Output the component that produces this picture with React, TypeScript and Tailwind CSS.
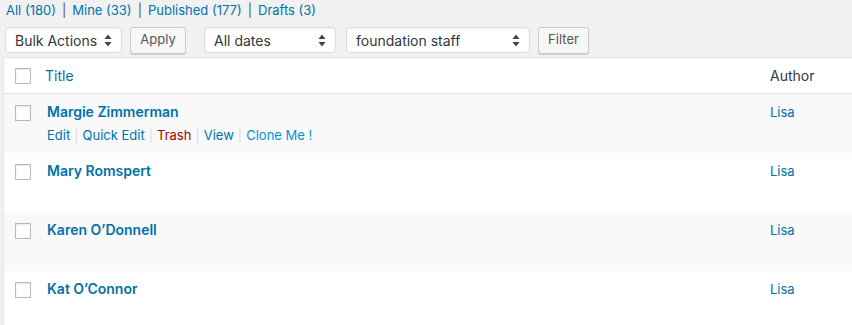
import React from "react";

type Post = {
  title: string
  author: string
  actions?: boolean
}

const posts: Post[] = [
  { title: "Margie Zimmerman", author: "Lisa", actions: true },
  { title: "Mary Romspert", author: "Lisa" },
  { title: "Karen O’Donnell", author: "Lisa" },
  { title: "Kat O’Connor", author: "Lisa" },
]

const Arrows = () => (
  <svg width="8" height="13" viewBox="0 0 8 13" className="shrink-0">
    <path d="M4 0.5 L7.5 5 H0.5 Z" fill="#444" />
    <path d="M4 12.5 L7.5 8 H0.5 Z" fill="#444" />
  </svg>
)

const Select = ({ label, width }: { label: string; width: string }) => (
  <div
    className={`${width} h-[26px] flex items-center justify-between pl-[9px] pr-[9px] bg-white border border-[#ddd] rounded-[4px] shadow-[inset_0_1px_2px_rgba(0,0,0,0.07)] text-[14px] text-[#32373c]`}
  >
    <span>{label}</span>
    <Arrows />
  </div>
)

const Button = ({ label, width }: { label: string; width: string }) => (
  <div
    className={`${width} h-[27px] flex items-center justify-center bg-[#f7f7f7] border border-[#ccc] rounded-[3px] shadow-[0_1px_0_#ccc] text-[13px] text-[#555]`}
  >
    {label}
  </div>
)

const Checkbox = () => (
  <div className="w-[16px] h-[16px] bg-white border border-[#b4b9be] shadow-[inset_0_1px_2px_rgba(0,0,0,0.1)]" />
)

const Sep = () => <span className="text-[#555] px-[6px]">|</span>
const ActionSep = () => <span className="text-[#ddd] px-[4px]">|</span>

export default function App() {
  return (
    <div className="w-[852px] h-[325px] overflow-hidden bg-[#f1f1f1] font-['Inter',sans-serif]">
      <div className="h-[20px] pl-[6px] pt-[1px] text-[13px] leading-[17px] text-[#0073aa] flex items-center">
        <span>All (180)</span>
        <Sep />
        <span>Mine (33)</span>
        <Sep />
        <span>Published (177)</span>
        <Sep />
        <span>Drafts (3)</span>
      </div>

      <div className="flex items-center pl-[5px] mt-[7px] h-[26px]">
        <Select label="Bulk Actions" width="w-[117px]" />
        <div className="ml-[8px]">
          <Button label="Apply" width="w-[56px]" />
        </div>
        <div className="ml-[18px]">
          <Select label="All dates" width="w-[132px]" />
        </div>
        <div className="ml-[10px]">
          <Select label="foundation staff" width="w-[184px]" />
        </div>
        <div className="ml-[8px]">
          <Button label="Filter" width="w-[51px]" />
        </div>
      </div>

      <div className="ml-[3px] mt-[4px] w-[960px] bg-white border border-[#e5e5e5] shadow-[0_1px_1px_rgba(0,0,0,0.04)]">
        <div className="h-[36px] flex items-center border-b border-[#e1e1e1]">
          <div className="w-[41px] pl-[11px]">
            <Checkbox />
          </div>
          <div className="w-[725px] text-[14px] text-[#0073aa]">Title</div>
          <div className="text-[14px] text-[#32373c]">Author</div>
        </div>

        {posts.map((post, i) => (
          <div
            key={post.title}
            className={`h-[59px] flex items-start ${i % 2 === 0 ? "bg-[#f9f9f9]" : "bg-white"}`}
          >
            <div className="w-[43px] pl-[11px] pt-[11px]">
              <Checkbox />
            </div>
            <div className="w-[723px] pt-[9px]">
              <div className="text-[14px] font-semibold text-[#0073aa] leading-[18px]">{post.title}</div>
              {post.actions && (
                <div className="mt-[6px] text-[13px] leading-[16px] text-[#0073aa] flex items-center">
                  <span>Edit</span>
                  <ActionSep />
                  <span>Quick Edit</span>
                  <ActionSep />
                  <span className="text-[#a00]">Trash</span>
                  <ActionSep />
                  <span>View</span>
                  <ActionSep />
                  <span className="text-[#0096d6]">Clone Me !</span>
                </div>
              )}
            </div>
            <div className="pt-[10px] text-[13px] leading-[16px] text-[#0073aa]">{post.author}</div>
          </div>
        ))}
      </div>
    </div>
  )
}
